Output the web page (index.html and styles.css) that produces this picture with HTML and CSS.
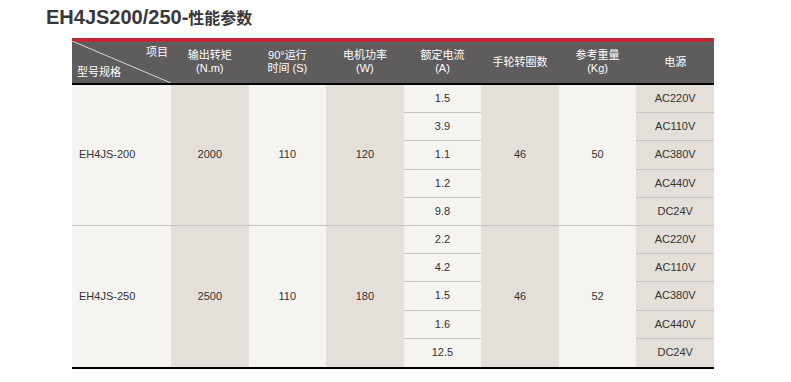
FILE: index.html
```html
<!DOCTYPE html>
<html lang="zh">
<head>
<meta charset="utf-8">
<title>EH4JS200/250-性能参数</title>
<link rel="stylesheet" href="styles.css">
</head>
<body>
<h1 class="title">EH4JS200/250-<span class="title-cn">性能参数</span></h1>
<div class="spec">
  <table class="spec-table">
    <colgroup>
      <col class="c-model"><col><col><col><col><col><col><col>
    </colgroup>
    <thead>
      <tr>
        <th class="corner">
          <svg class="diag" viewBox="0 0 100 42" preserveAspectRatio="none"><line x1="0" y1="0" x2="100" y2="42" stroke="#d8d8d8" stroke-width="1" vector-effect="non-scaling-stroke"/></svg>
          <span class="corner-top">项目</span>
          <span class="corner-bottom">型号规格</span>
        </th>
        <th>输出转矩<br>(N.m)</th>
        <th>90°运行<br>时间 (S)</th>
        <th>电机功率<br>(W)</th>
        <th>额定电流<br>(A)</th>
        <th>手轮转圈数</th>
        <th>参考重量<br>(Kg)</th>
        <th>电源</th>
      </tr>
    </thead>
    <tbody class="group">
      <tr>
        <td rowspan="5" class="model light sep">EH4JS-200</td>
        <td rowspan="5" class="dark sep">2000</td>
        <td rowspan="5" class="light sep">110</td>
        <td rowspan="5" class="dark sep">120</td>
        <td class="light sep">1.5</td>
        <td rowspan="5" class="dark sep">46</td>
        <td rowspan="5" class="light sep">50</td>
        <td class="dark sep">AC220V</td>
      </tr>
      <tr><td class="light sep">3.9</td><td class="dark sep">AC110V</td></tr>
      <tr><td class="light sep">1.1</td><td class="dark sep">AC380V</td></tr>
      <tr><td class="light sep">1.2</td><td class="dark sep">AC440V</td></tr>
      <tr><td class="light sep">9.8</td><td class="dark sep">DC24V</td></tr>
    </tbody>
    <tbody class="group">
      <tr>
        <td rowspan="5" class="model light">EH4JS-250</td>
        <td rowspan="5" class="dark">2500</td>
        <td rowspan="5" class="light">110</td>
        <td rowspan="5" class="dark">180</td>
        <td class="light sep">2.2</td>
        <td rowspan="5" class="dark">46</td>
        <td rowspan="5" class="light">52</td>
        <td class="dark sep">AC220V</td>
      </tr>
      <tr><td class="light sep">4.2</td><td class="dark sep">AC110V</td></tr>
      <tr><td class="light sep">1.5</td><td class="dark sep">AC380V</td></tr>
      <tr><td class="light sep">1.6</td><td class="dark sep">AC440V</td></tr>
      <tr><td class="light">12.5</td><td class="dark">DC24V</td></tr>
    </tbody>
  </table>
</div>
</body>
</html>
```
FILE: styles.css
```css
html, body {
  margin: 0;
  padding: 0;
  background: #ffffff;
}

body {
  font-family: "Liberation Sans", Arial, "Noto Sans CJK SC", sans-serif;
  color: #333333;
}

.title {
  margin: 0;
  padding: 6px 0 0 46px;
  height: 32px;
  box-sizing: border-box;
  font-size: 20px;
  line-height: 22px;
  font-weight: bold;
  color: #383838;
  letter-spacing: 0;
}

.title-cn {
  font-family: "Noto Sans CJK SC", sans-serif;
  font-size: 16px;
  font-weight: bold;
}

.spec {
  margin-left: 72px;
  width: 642px;
  border-top: 3px solid #c9232b;
  border-bottom: 2px solid #000000;
  margin-top: 6px;
}

.spec-table {
  width: 642px;
  table-layout: fixed;
  border-collapse: separate;
  border-spacing: 0;
  font-size: 11px;
}

.c-model {
  width: 99px;
}

.spec-table th {
  height: 42px;
  padding: 0;
  background: #5e5c5d;
  color: #ffffff;
  font-weight: normal;
  font-size: 11px;
  line-height: 13px;
  text-align: center;
  vertical-align: middle;
  border-bottom: 2px solid #000000;
  font-family: "Liberation Sans", Arial, "Noto Sans CJK SC", sans-serif;
}

.spec-table th.corner {
  position: relative;
  text-align: left;
}

.diag {
  position: absolute;
  left: 0;
  top: 0;
  width: 100%;
  height: 100%;
}

.corner-top {
  position: absolute;
  right: 3px;
  top: 5px;
}

.corner-bottom {
  position: absolute;
  left: 5px;
  bottom: 4px;
}

.spec-table tbody tr {
  height: 28.2px;
}

.spec-table td {
  padding: 0;
  text-align: center;
  vertical-align: middle;
  color: #333333;
  font-size: 11px;
  line-height: 13px;
}

.spec-table td.model {
  text-align: left;
  padding-left: 7px;
}

.light {
  background: #f6f4f0;
}

.dark {
  background: #e4e0d9;
}

.sep {
  border-bottom: 1px solid #c4c4c4;
}
```
